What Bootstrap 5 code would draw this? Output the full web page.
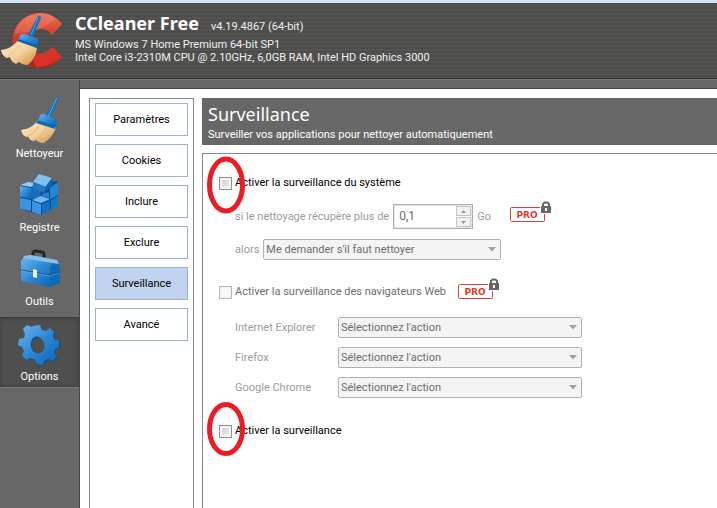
<!DOCTYPE html>
<html lang="fr">
<head>
<meta charset="utf-8">
<meta name="viewport" content="width=device-width, initial-scale=1">
<title>CCleaner Free</title>
<link href="https://cdn.jsdelivr.net/npm/bootstrap@5.3.0/dist/css/bootstrap.min.css" rel="stylesheet">
<style>
  body { font: 11px/14px Roboto, sans-serif; color: #000; background: #676767; }
  .app { border-top: 3px solid #d6e0f5; }
  .app-header { height: 76px; color: #f0f0f0; border-bottom: 1px solid #333;
    background: repeating-linear-gradient(#4c4c4a 0 2px, #535351 2px 4px); }
  .app-logo { width: 64px; height: 60px; }
  .app-info { margin-left: 11px; padding-bottom: 5px; line-height: 13px; }
  .app-name { font: bold 18px/22px "Noto Sans", sans-serif; color: #fff; margin: 0; }
  .app-body { border-top: 1px solid #757575; }
  .sidebar { width: 80px; padding-top: 15px; border-right: 1px solid #444; }
  .side-item { height: 74px; color: #fff; text-decoration: none; }
  .side-item svg { width: 48px; height: 52px; }
  .side-item.active { height: 71px; background: #4f4f4f; border-top: 1px solid #3c3c3c; border-bottom: 1px solid #777; box-shadow: inset 0 0 4px #3a3a3a; }
  .workspace { margin-top: 8px; border-top: 1px solid #444; padding: 9px 0 0 9px; }
  .option-tabs { width: 105px; gap: 8px; padding: 4px 5px; border: 1px solid #888892; border-bottom: 0; margin-right: 8px; }
  .option-tab { height: 33px; border: 1px solid #9ab3d0; background: #fff; color: #000; padding: 0; }
  .option-tab.active { background: #c2d3ef; }
  .page-title { height: 47px; padding: 5px 6px; background: #676767; color: #fff; margin-bottom: 8px; }
  .page-title h1 { font: 18px/22px "Noto Sans", sans-serif; margin: 0 0 3px; }
  .settings { border: 1px solid #888892; border-width: 1px 0 0 1px; padding: 22px 16px; }
  .check-line { gap: 3px; height: 14px; }
  .tick { appearance: none; width: 13px; height: 13px; margin: 0; border: 1px solid #8e8f8f; background: linear-gradient(135deg, #c4c9d2, #f6f6f6); box-shadow: inset 0 0 0 2px #f4f4f4; }
  .tick:disabled { background: #fafafa; border-color: #b5b5b5; }
  .off { color: #9c9c9c; }
  .dim { color: #6d6d6d; }
  .sub { padding-left: 16px; }
  .amount { margin-top: 14px; height: 25px; gap: 4px; }
  .spin { width: 80px; height: 25px; border: 1px solid #abadb3; box-shadow: inset 0 0 0 1px #e8e8e8; padding: 1px 1px 1px 5px; }
  .spin input { width: 56px; height: 19px; border: 0; padding: 0; background: transparent; color: #6d6d6d; font-size: 12px; }
  .spin button { width: 15px; height: 10px; padding: 0; border: 1px solid #c5c5c5; background: #f2f2f2; line-height: 0; }
  .spin svg { width: 5px; height: 3px; }
  .pick { appearance: none; height: 21px; border: 1px solid #adb2b5; border-radius: 2px; padding: 0 20px 0 2px; color: #6d6d6d; opacity: 1;
    background: #f4f4f4 url("data:image/svg+xml,%3Csvg xmlns='http://www.w3.org/2000/svg' width='8' height='5'%3E%3Cpath d='M0 0H8L4 4.5Z' fill='%23a0a0a0'/%3E%3C/svg%3E") no-repeat right 4px center; }
  .action { margin: 10px 0 25px; gap: 4px; }
  .action .pick { width: 238px; }
  .browsers { display: grid; grid-template-columns: 103px 244px; row-gap: 9px; margin: 18px 0 26px; align-items: center; }
  .pro { width: 42px; height: 21px; }
  .amount .pro { margin-left: 15px; margin-bottom: 10px; }
  .check-line .pro { margin-left: 9px; margin-bottom: 8px; }
  .ring { position: absolute; left: -13px; top: -21px; width: 40px; height: 60px; pointer-events: none; }
  .ring-low { top: -25px; }
</style>
</head>
<body>
<svg class="position-absolute" width="0" height="0" aria-hidden="true">
  <defs>
    <linearGradient id="blue" x1="0" y1="0" x2="1" y2="1"><stop offset="0" stop-color="#72b5ed"/><stop offset=".5" stop-color="#2c88d4"/><stop offset="1" stop-color="#0d62ae"/></linearGradient>
    <linearGradient id="straw" x1="0" y1="0" x2="1" y2="1"><stop offset="0" stop-color="#ffecc8"/><stop offset=".55" stop-color="#f4cf98"/><stop offset="1" stop-color="#cd8b3c"/></linearGradient>
    <linearGradient id="red" x1="0" y1="0" x2="0" y2="1"><stop offset="0" stop-color="#ee6a50"/><stop offset=".45" stop-color="#d23a29"/><stop offset="1" stop-color="#b81d1b"/></linearGradient>
    <symbol id="broom" viewBox="0 0 40 50">
      <path d="M36 1q3-1 2 2L29 23l-5-2Z" fill="#1172c0"/><path d="M36 2 27 21" stroke="#59aeea"/>
      <path d="M19 20q1-3 4-2l11 5q3 1 2 4l-1 4-18-6Z" fill="url(#blue)"/>
      <path d="M17 24Q11 33 0 34q1 5 5 7l2-1q1 4 5 5l3-1q3 3 8 3 10-7 12-16Z" fill="url(#straw)"/>
      <path d="M18 30Q14 37 5 41M25 31Q23 39 12 45" stroke="#dfb77d" fill="none"/>
      <path d="m17 24 18 6-1 3-19-6Z" fill="#0e69b3"/>
    </symbol>
    <symbol id="pro" viewBox="0 0 42 21">
      <rect x=".5" y="6.500" width="34" height="14" rx="1" fill="#fff" stroke="#db4038"/>
      <text x="17" y="17" text-anchor="middle" font-family="DejaVu Sans" font-weight="bold" font-size="9" fill="#db3c32">PRO</text>
      <path d="M30 4h12v9H30Z" fill="#fff"/><path d="M31 5h10v7H31Z" fill="#666"/><path d="M33 6V3L34.500 1.500h3L39 3V6" fill="none" stroke="#666" stroke-width="2"/><path d="M35 7h2v3h-2Z" fill="#fff"/>
    </symbol>
    <symbol id="ring" viewBox="0 0 40 60"><ellipse cx="20" cy="30" rx="16.500" ry="26" fill="none" stroke="#ed1c24" stroke-width="5"/></symbol>
    <symbol id="ring-short" viewBox="0 0 40 60"><ellipse cx="20" cy="30" rx="16.500" ry="24.500" fill="none" stroke="#ed1c24" stroke-width="5"/></symbol>
  </defs>
</svg>

<div class="app d-flex flex-column min-vh-100">
  <header class="app-header d-flex align-items-center">
    <svg class="app-logo flex-shrink-0" viewBox="0 0 64 60" role="img" aria-label="CCleaner">
      <path d="M62 13A27.500 27.500 0 1 0 62 46L53 36A13 13 0 1 1 52 24Z" fill="url(#red)"/>
      <path d="M62 13C50 -2 28 1 19 12L14 22Q34 24 56 8Z" fill="#f69a80" opacity=".3"/>
      <path d="M30 39Q38 48 53 36L62 46Q50 56 36 56Z" fill="#e2372c" opacity=".7"/>
      <path d="M38 5q3-1 3 2l-8 19-5-2Z" fill="#1172c0"/><path d="M38 7 31 24" stroke="#4aa0df"/>
      <path d="M20 25q1-3 4-2l12 4q3 1 2 4l-1 5-19-6Z" fill="url(#blue)"/>
      <path d="M19 28Q12 38 1 39q1 6 6 8l3-1q1 5 6 7l3-2q3 3 9 3 8-7 9-17Z" fill="url(#straw)"/>
      <path d="M19 35Q14 42 7 46M28 38Q25 45 16 51" stroke="#e8c592" fill="none"/>
      <path d="m19 28 18 6v3l-20-7Z" fill="#0c64ad"/>
    </svg>
    <div class="app-info">
      <div class="d-flex align-items-baseline"><p class="app-name">CCleaner Free</p><span class="ms-2 ps-1">v4.19.4867 (64-bit)</span></div>
      <div class="pt-1">MS Windows 7 Home Premium 64-bit SP1</div>
      <div>Intel Core i3-2310M CPU @ 2.10GHz, 6,0GB RAM, Intel HD Graphics 3000</div>
    </div>
  </header>

  <div class="app-body d-flex flex-grow-1">
    <nav class="sidebar flex-shrink-0" aria-label="Sections">
      <a class="side-item d-flex flex-column align-items-center" href="#nettoyeur"><svg viewBox="0 0 48 52"><use href="#broom" x="5" y="1" width="40" height="50"/></svg>Nettoyeur</a>
      <a class="side-item d-flex flex-column align-items-center" href="#registre"><svg viewBox="0 0 48 52">
        <path d="m4 17 8-4 18 1 12-2v24l-17 10-10-3-11-3Z" fill="#0b4c8e"/>
        <path d="m4 17 11 2v11L4 28Z" fill="url(#blue)"/><path d="m4 16 8-3 9 1-6 4Z" fill="#9acbf3"/>
        <path d="m15 19 7-4 3 9-1 5-9 1Z" fill="#1a6db9"/>
        <path d="m4 29 11 2v11L4 40Z" fill="#3d93de"/>
        <path d="m16 31 9-4 9 3-9 4Z" fill="#75b9ee"/><path d="m16 32 9 3v11l-9-3Z" fill="#3b94df"/><path d="m26 35 8-4v10l-8 5Z" fill="#1670bf"/>
        <path d="m34 19 8-6v13l-8 4Z" fill="#2287d3"/><path d="m35 31 7-4v10l-7 4Z" fill="#0f79c4"/><path d="m26 25 7-2v6l-7-2Z" fill="#2c83cd"/>
        <path d="m23 5 13 4-6 9-13-5Z" fill="#82bef0"/><path d="m17 13 13 5-2 6-11-5Z" fill="#2278c8"/><path d="m36 9 1 7-9 8 2-7Z" fill="#1261af"/>
      </svg>Registre</a>
      <a class="side-item d-flex flex-column align-items-center" href="#outils"><svg viewBox="0 0 48 52">
        <path d="M17 15v-5q0-2 3-2l6 1q2 0 2 3v5" fill="none" stroke="#252525" stroke-width="3"/>
        <path d="m5 18 3-4 29 5-3 6v19L5 38Z" fill="url(#blue)"/><path d="m34 25 3-6 5 1 2 4v16l-10 4Z" fill="#1168b3"/>
        <path d="m8 13 7-1 26 5 2 4-7-1-29-5Z" fill="#85c1f0"/><path d="m5 27 29 5 9-3" fill="none" stroke="#0d579d"/><path d="m5 28 29 5 9-3" fill="none" stroke="#7bbcf0" stroke-width=".5"/>
        <path d="m17 26 4 1v8l-4-1Z" fill="#f4f7fa"/>
      </svg>Outils</a>
      <a class="side-item active d-flex flex-column align-items-center" href="#options" aria-current="page"><svg viewBox="0 0 48 52">
        <path fill-rule="evenodd" d="m18 9 7-1 2 5 4 1 4-3 4 4-1 5 2 3h4v7l-4 2-1 4 3 4-5 4-4-2-4 2-1 4-6-1-2-4-4-2-5 2-4-5 2-4-2-4-4-2 1-6 5-1 1-4-2-5 4-4 5 2ZM24 20c-5-2-9 3-8 9 1 7 7 9 11 6 5-5 2-13-3-15Z" fill="#0a518f"/>
        <path fill-rule="evenodd" d="m17 8 7-1 2 5 4 1 4-3 4 4-1 5 2 3h4v7l-4 2-1 4 3 4-5 4-4-2-4 2-1 4-6-1-2-4-4-2-5 2-4-5 2-4-2-4-4-2 1-6 5-1 1-4-2-5 4-4 5 2ZM23 19c-5-2-9 3-8 9 1 7 7 9 11 6 5-5 2-13-3-15Z" fill="url(#blue)"/>
      </svg>Options</a>
    </nav>

    <main class="workspace d-flex flex-grow-1 bg-white">
      <nav class="option-tabs d-flex flex-column flex-shrink-0" aria-label="Options">
        <button type="button" class="option-tab">Paramètres</button>
        <button type="button" class="option-tab">Cookies</button>
        <button type="button" class="option-tab">Inclure</button>
        <button type="button" class="option-tab">Exclure</button>
        <button type="button" class="option-tab active" aria-current="page">Surveillance</button>
        <button type="button" class="option-tab">Avancé</button>
      </nav>
      <section class="d-flex flex-column flex-grow-1">
        <div class="page-title"><h1>Surveillance</h1><div>Surveiller vos applications pour nettoyer automatiquement</div></div>
        <form class="settings flex-grow-1">
          <div class="check-line d-flex align-items-center position-relative">
            <input class="tick" type="checkbox" id="system"><label for="system">Activer la surveillance du système</label>
            <svg class="ring" aria-hidden="true"><use href="#ring"/></svg>
          </div>
          <div class="sub amount d-flex align-items-center">
            <label class="off" for="size">si le nettoyage récupère plus de</label>
            <div class="spin d-flex justify-content-between">
              <input type="text" id="size" value="0,1" disabled>
              <div class="d-flex flex-column justify-content-between">
                <button type="button" class="d-flex align-items-center justify-content-center" aria-label="Augmenter" disabled><svg viewBox="0 0 5 3"><path d="M0 3h5L2.500 0Z" fill="#999"/></svg></button>
                <button type="button" class="d-flex align-items-center justify-content-center" aria-label="Diminuer" disabled><svg viewBox="0 0 5 3"><path d="M0 0h5L2.500 3Z" fill="#999"/></svg></button>
              </div>
            </div>
            <span class="off">Go</span>
            <svg class="pro" role="img" aria-label="PRO"><use href="#pro"/></svg>
          </div>
          <div class="sub action d-flex align-items-center">
            <label class="off" for="then">alors</label>
            <select class="pick" id="then" disabled><option>Me demander s'il faut nettoyer</option></select>
          </div>
          <div class="check-line d-flex align-items-center">
            <input class="tick" type="checkbox" id="web" disabled><label class="dim" for="web">Activer la surveillance des navigateurs Web</label>
            <svg class="pro" role="img" aria-label="PRO"><use href="#pro"/></svg>
          </div>
          <div class="browsers sub">
            <label class="off" for="ie">Internet Explorer</label><select class="pick" id="ie" disabled><option>Sélectionnez l'action</option></select>
            <label class="off" for="ff">Firefox</label><select class="pick" id="ff" disabled><option>Sélectionnez l'action</option></select>
            <label class="off" for="gc">Google Chrome</label><select class="pick" id="gc" disabled><option>Sélectionnez l'action</option></select>
          </div>
          <div class="check-line d-flex align-items-center position-relative">
            <input class="tick" type="checkbox" id="watch"><label for="watch">Activer la surveillance</label>
            <svg class="ring ring-low" aria-hidden="true"><use href="#ring-short"/></svg>
          </div>
        </form>
      </section>
    </main>
  </div>
</div>
<script src="https://cdn.jsdelivr.net/npm/bootstrap@5.3.0/dist/js/bootstrap.bundle.min.js"></script>
</body>
</html>
